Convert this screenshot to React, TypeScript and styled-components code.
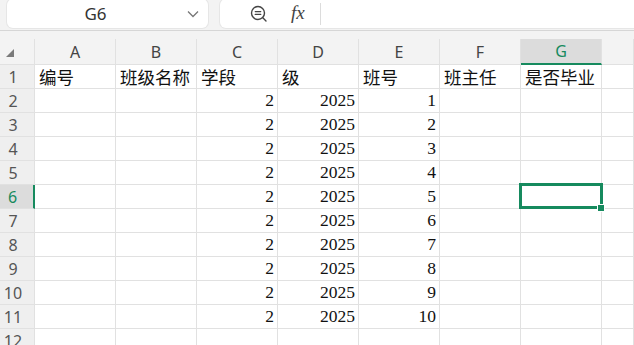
import styled, { createGlobalStyle } from 'styled-components'

const GREEN = '#168a5e'
const LINE = '#e1e1e1'

const GlobalStyle = createGlobalStyle`
  html, body {
    margin: 0;
    padding: 0;
    background: #f3f3f3;
    overflow: hidden;
  }
  body {
    font-family: 'Noto Sans', 'Liberation Sans', 'Noto Sans CJK SC', sans-serif;
  }
`

const columns = ['A', 'B', 'C', 'D', 'E', 'F', 'G', '']

const headerRow = ['编号', '班级名称', '学段', '级', '班号', '班主任', '是否毕业', '']

const rows = Array.from({ length: 10 }, (_, i) => ['', '', '2', '2025', String(i + 1), '', '', ''])

const selectedRow = 6
const selectedCol = 6

const Page = styled.div`
  width: 634px;
  height: 345px;
  overflow: hidden;
  background: #f3f3f3;
`

const Toolbar = styled.div`
  display: flex;
  gap: 12px;
  height: 31px;
  padding-left: 7px;
  box-sizing: border-box;
  border-bottom: 1px solid #d6d6d6;
`

const NameBox = styled.div`
  position: relative;
  width: 201px;
  height: 29px;
  margin-top: -1px;
  padding-right: 24px;
  box-sizing: border-box;
  background: #fff;
  border-radius: 6px;
  box-shadow: 0 0 0 1px #e6e6e6;
  display: flex;
  align-items: center;
  justify-content: center;
  font-size: 17px;
  color: #333;
`

const Chevron = styled.svg`
  position: absolute;
  right: 9px;
  top: 11px;
`

const FormulaBox = styled.div`
  flex: 1;
  height: 29px;
  margin-top: -1px;
  background: #fff;
  border-radius: 6px 0 0 6px;
  box-shadow: 0 0 0 1px #e6e6e6;
  display: flex;
  align-items: center;
  padding-left: 29px;
`

const Fx = styled.span`
  font-family: 'Liberation Serif', serif;
  font-style: italic;
  font-size: 19px;
  color: #444;
  margin-left: 22px;
  margin-top: -2px;
`

const Divider = styled.div`
  width: 1px;
  height: 22px;
  background: #dcdcdc;
  margin-left: 15px;
`

const Grid = styled.div`
  margin-top: 8px;
  display: grid;
  grid-template-columns: 35px repeat(7, 81px) 1fr;
  grid-template-rows: 26px;
  grid-auto-rows: 24px;
`

const Corner = styled.div`
  position: relative;
  box-sizing: border-box;
  border-right: 1px solid ${LINE};
  border-bottom: 1px solid ${LINE};
`

const CornerMark = styled.div`
  position: absolute;
  left: 6px;
  top: 10px;
  width: 0;
  height: 0;
  border-left: 8px solid transparent;
  border-bottom: 8px solid #7a7a7a;
`

const ColHead = styled.div<{ $active?: boolean }>`
  box-sizing: border-box;
  display: flex;
  align-items: center;
  justify-content: center;
  font-size: 16px;
  color: ${(p) => (p.$active ? GREEN : '#444')};
  background: ${(p) => (p.$active ? '#dcdcdc' : 'transparent')};
  border-right: 1px solid ${LINE};
  border-bottom: ${(p) => (p.$active ? `2px solid ${GREEN}` : `1px solid ${LINE}`)};
`

const RowHead = styled.div<{ $active?: boolean }>`
  box-sizing: border-box;
  display: flex;
  align-items: center;
  justify-content: center;
  padding-right: 8px;
  font-size: 16px;
  color: ${(p) => (p.$active ? GREEN : '#555')};
  background: ${(p) => (p.$active ? '#dcdcdc' : '#efefef')};
  border-right: ${(p) => (p.$active ? `2px solid ${GREEN}` : `1px solid ${LINE}`)};
  border-bottom: 1px solid ${LINE};
`

const Cell = styled.div<{ $num?: boolean }>`
  position: relative;
  box-sizing: border-box;
  background: #fff;
  display: flex;
  align-items: center;
  justify-content: ${(p) => (p.$num ? 'flex-end' : 'flex-start')};
  padding: 0 3px 0 4px;
  font-family: 'Liberation Serif', 'Noto Sans CJK SC', serif;
  font-size: 17.5px;
  color: #111;
  white-space: nowrap;
  overflow: visible;
  border-right: 1px solid ${LINE};
  border-bottom: 1px solid ${LINE};
`

const Selection = styled.div`
  position: absolute;
  left: -2px;
  right: -2px;
  top: -2px;
  bottom: -1px;
  border: 3px solid ${GREEN};
  z-index: 2;
`

const Handle = styled.div`
  position: absolute;
  right: -4px;
  bottom: -5px;
  width: 6px;
  height: 6px;
  background: ${GREEN};
  box-shadow: 0 0 0 1px #fff;
`

function SearchIcon() {
  return (
    <svg width="20" height="20" viewBox="0 0 20 20" fill="none" stroke="#444" strokeWidth="1.4" strokeLinecap="round">
      <circle cx="9" cy="9" r="6.5" />
      <line x1="6.3" y1="7.6" x2="11.7" y2="7.6" />
      <line x1="6.3" y1="10.4" x2="11.7" y2="10.4" />
      <line x1="13.8" y1="13.8" x2="17" y2="17" />
    </svg>
  )
}

function Row({ index, values }: { index: number; values: string[] }) {
  return (
    <>
      <RowHead $active={index === selectedRow}>{index}</RowHead>
      {values.map((v, c) => (
        <Cell key={c} $num={v !== '' && !isNaN(Number(v))}>
          {v}
          {index === selectedRow && c === selectedCol && (
            <Selection>
              <Handle />
            </Selection>
          )}
        </Cell>
      ))}
    </>
  )
}

export default function App() {
  return (
    <Page>
      <GlobalStyle />
      <Toolbar>
        <NameBox>
          G6
          <Chevron width="12" height="8" viewBox="0 0 12 8" fill="none" stroke="#777" strokeWidth="1.3">
            <polyline points="1,1.5 6,6.5 11,1.5" />
          </Chevron>
        </NameBox>
        <FormulaBox>
          <SearchIcon />
          <Fx>fx</Fx>
          <Divider />
        </FormulaBox>
      </Toolbar>
      <Grid>
        <Corner>
          <CornerMark />
        </Corner>
        {columns.map((c, i) => (
          <ColHead key={i} $active={i === selectedCol}>
            {c}
          </ColHead>
        ))}
        <Row index={1} values={headerRow} />
        {rows.map((r, i) => (
          <Row key={i} index={i + 2} values={r} />
        ))}
        <Row index={12} values={['', '', '', '', '', '', '', '']} />
      </Grid>
    </Page>
  )
}
